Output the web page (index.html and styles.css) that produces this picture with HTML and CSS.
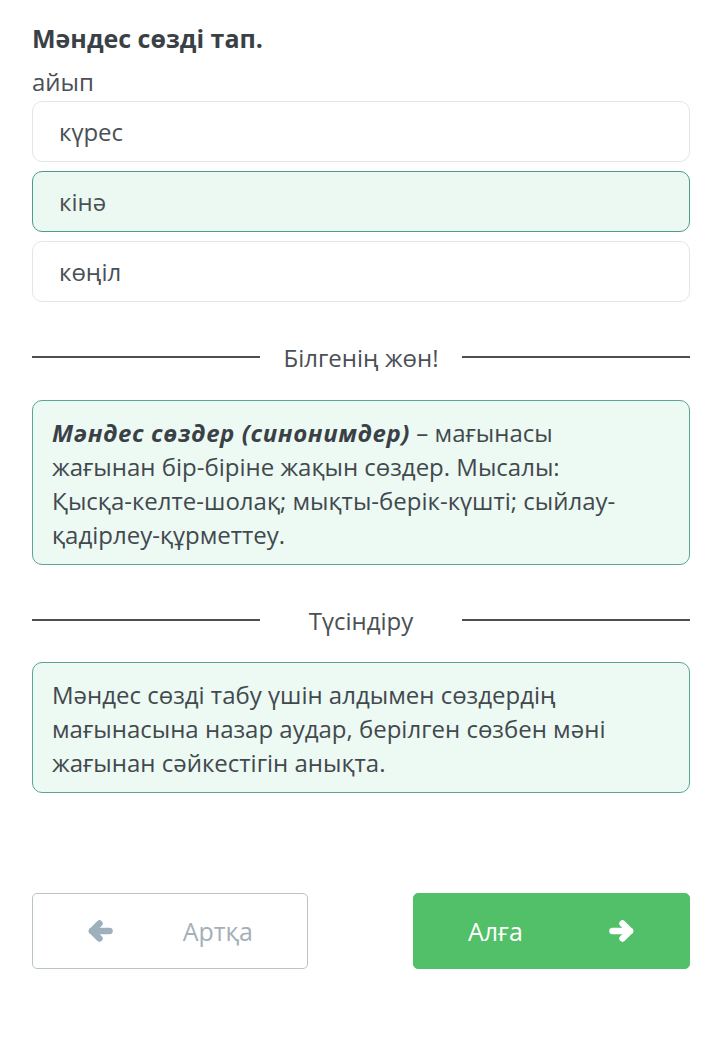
FILE: index.html
```html
<!DOCTYPE html>
<html lang="kk">
<head>
<meta charset="utf-8">
<link rel="stylesheet" href="styles.css">
</head>
<body>
<main class="page">
  <h1 class="title">Мәндес сөзді тап.</h1>
  <div class="word">айып</div>
  <div class="options">
    <div class="option">күрес</div>
    <div class="option selected">кінә</div>
    <div class="option">көңіл</div>
  </div>
  <div class="divider"><span class="line"></span><span class="label">Білгенің жөн!</span><span class="line"></span></div>
  <div class="info"><b><i>Мәндес сөздер (синонимдер)</i></b> – мағынасы жағынан бір-біріне жақын сөздер. Мысалы: Қысқа-келте-шолақ; мықты-берік-күшті; сыйлау-қадірлеу-құрметтеу.</div>
  <div class="divider second"><span class="line"></span><span class="label">Түсіндіру</span><span class="line"></span></div>
  <div class="info second">Мәндес сөзді табу үшін алдымен сөздердің мағынасына назар аудар, берілген сөзбен мәні жағынан сәйкестігін анықта.</div>
  <div class="nav">
    <button class="btn back">
      <svg class="arrow" viewBox="0 0 26 24" width="26" height="24"><g fill="none" stroke="currentColor" stroke-width="6.5" stroke-linecap="round" stroke-linejoin="round"><path d="M22.5 12H5"/><path d="M12.5 4.5L5 12l7.5 7.5"/></g></svg>
      <span>Артқа</span>
    </button>
    <button class="btn next">
      <span>Алға</span>
      <svg class="arrow" viewBox="0 0 26 24" width="26" height="24"><g fill="none" stroke="currentColor" stroke-width="6.5" stroke-linecap="round" stroke-linejoin="round"><path d="M3.5 12H21"/><path d="M13.5 4.5L21 12l-7.5 7.5"/></g></svg>
    </button>
  </div>
</main>
</body>
</html>
```

FILE: styles.css
```css
* { box-sizing: border-box; }
html, body { margin: 0; padding: 0; background: #fff; }
body {
  font-family: "Open Sans", "Noto Sans", sans-serif;
  color: #41484d;
}
.page {
  width: 720px;
  padding: 20px 30px 0 32px;
}
.title {
  margin: 0;
  font-size: 25px;
  font-weight: 700;
  line-height: 36px;
  color: #3a4146;
}
.word {
  font-size: 24px;
  line-height: 34px;
  margin-top: 9px;
  color: #4a5055;
}
.options {
  display: flex;
  flex-direction: column;
  gap: 9px;
  margin-top: 2px;
}
.option {
  height: 61px;
  border: 1px solid #e3e6e8;
  border-radius: 10px;
  padding: 0 26px;
  display: flex;
  align-items: center;
  font-size: 24px;
  color: #4a5055;
  background: #fff;
}
.option.selected {
  background: #ecf9f2;
  border-color: #4f9a8c;
}
.divider {
  display: flex;
  align-items: center;
  margin-top: 38px;
  height: 34px;
}
.divider .line {
  flex: 1;
  height: 2px;
  background: #4a4f53;
}
.divider .label {
  width: 202px;
  text-align: center;
  font-size: 24px;
  color: #4a5055;
}
.divider.second { margin-top: 38px; }
.info {
  margin-top: 26px;
  background: #edf9f3;
  border: 1px solid #5ba597;
  border-radius: 10px;
  padding: 15px 44px 12px 19px;
  font-size: 24px;
  line-height: 34px;
  color: #42494e;
}
.info.second { margin-top: 25px; }
.info b { color: #3a4146; letter-spacing: 0.6px; }
.nav {
  display: flex;
  justify-content: space-between;
  margin-top: 100px;
}
.btn {
  width: 277px;
  height: 76px;
  border-radius: 5px;
  display: flex;
  align-items: center;
  justify-content: space-between;
  padding: 0 54px;
  font-family: "Open Sans", "Noto Sans", sans-serif;
  font-size: 25px;
  cursor: pointer;
}
.btn.back {
  width: 276px;
  background: #fff;
  border: 1px solid #b9c3c9;
  color: #a3b0b8;
}
.btn.back .arrow { color: #9db0bc; }
.btn.next {
  background: #52bf69;
  border: 1px solid #52bf69;
  color: #fff;
}
```
